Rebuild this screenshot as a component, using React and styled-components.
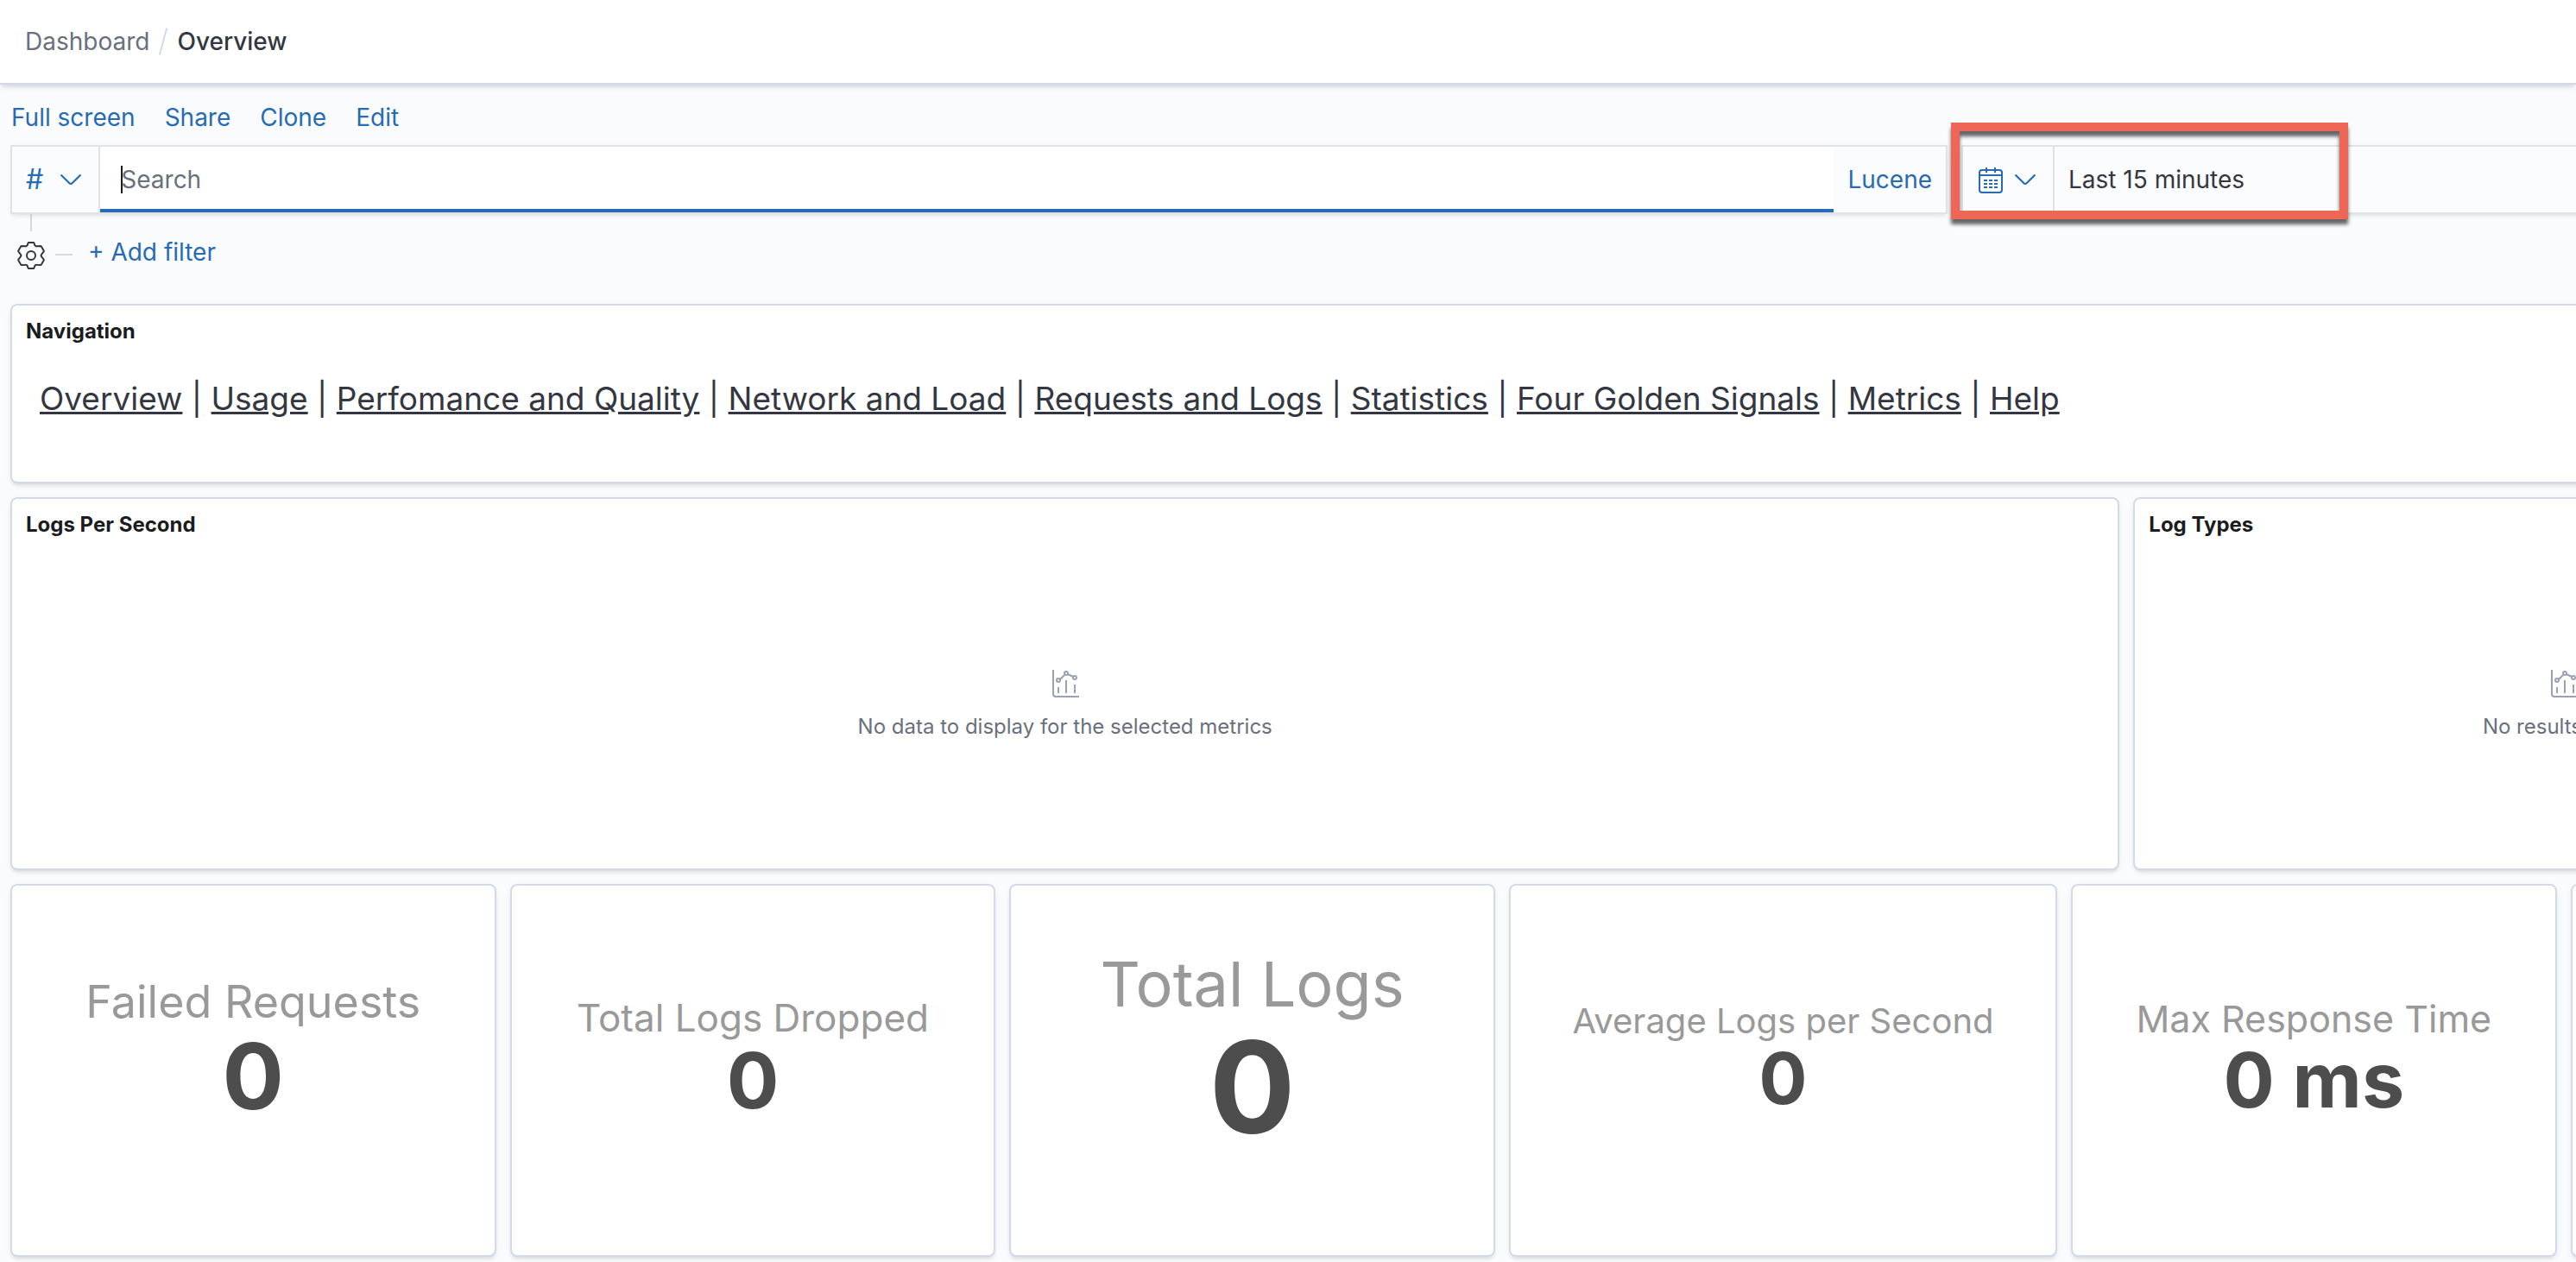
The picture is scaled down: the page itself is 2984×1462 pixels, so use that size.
import React from "react";
import styled, { createGlobalStyle, css } from "styled-components";

const GlobalStyle = createGlobalStyle`
  *, *::before, *::after { box-sizing: border-box; }
  body {
    margin: 0;
    background: #fafbfd;
    color: #343741;
    font-family: Inter, "Liberation Sans", sans-serif;
    font-size: 28px;
    line-height: 48px;
  }
  button, input { font: inherit; color: inherit; }
  svg { display: block; flex: none; }
`;

const blue = "#266bb3";
const line = "#d3dae6";
const controlLine = "#e0e2e5";
const subdued = "#69707d";

const Viewport = styled.div`
  min-height: 100vh;
  overflow: hidden;
`;

const Header = styled.header`
  height: 98px;
  display: flex;
  align-items: center;
  padding: 0 29px;
  background: #fff;
  border-bottom: 2px solid ${line};
  box-shadow: 0 4px 4px -2px rgba(152, 162, 179, 0.3), 0 2px 10px -2px rgba(152, 162, 179, 0.3);
`;

const Crumbs = styled.ol`
  display: flex;
  align-items: center;
  margin: 0;
  padding: 0;
  list-style: none;
`;

const CrumbLink = styled.a`
  color: ${subdued};
  text-decoration: none;
`;

const CrumbDivider = styled.li`
  width: 2px;
  height: 32px;
  margin: 0 15px;
  background: ${line};
  transform: rotate(15deg);
`;

const CurrentCrumb = styled.li`
  font-weight: 500;
`;

/* The dashboard is wider than the window and runs off its right edge. */
const Canvas = styled.div`
  width: calc(100% + 496px);
  padding: 0 12px 6px;
`;

const Menu = styled.nav`
  display: flex;
  gap: 34px;
  padding: 14px 1px 8px;
`;

const TextButton = styled.button`
  padding: 0;
  border: 0;
  background: none;
  color: ${blue};
  cursor: pointer;
`;

const QueryRow = styled.div`
  display: grid;
  grid-template-columns: minmax(0, 1fr) 1196px;
  gap: 16px;
`;

const ControlGroup = styled.div`
  position: relative;
  display: flex;
  height: 80px;
  border: 2px solid ${controlLine};
  background: #fbfcfe;
  box-shadow: 0 4px 4px -2px rgba(152, 162, 179, 0.2), 0 2px 10px -4px rgba(152, 162, 179, 0.2);
`;

const Segment = styled.button`
  display: flex;
  align-items: center;
  gap: ${(p) => p.$gap || 0}px;
  padding: 0 16px;
  border: 0;
  background: none;
  color: ${blue};
  cursor: pointer;
  ${(p) => p.$divided && css`border-right: 2px solid ${controlLine};`}
`;

const Hash = styled.span`
  font-size: 32px;
  font-weight: 400;
`;

const SearchInput = styled.input`
  flex: 1;
  min-width: 0;
  padding: 0 24px;
  border: 0;
  border-radius: 0;
  outline: 0;
  background: linear-gradient(#1a1c21, #1a1c21) 24px center / 2px 32px no-repeat #fff;
  box-shadow: inset 0 -4px 0 ${blue};
  &::placeholder { color: ${subdued}; opacity: 1; }
`;

const RangeButton = styled(Segment)`
  flex: 1;
  color: #343741;
`;

const Highlight = styled.div`
  position: absolute;
  top: -28px;
  left: -14px;
  width: 460px;
  height: 112px;
  border: 10px solid #ee6656;
  filter: drop-shadow(0 6px 2px rgba(0, 0, 0, 0.6));
  pointer-events: none;
`;

const FilterRow = styled.div`
  display: flex;
  align-items: flex-start;
  height: 104px;
  padding: 0 8px;
`;

const FilterOptions = styled.button`
  display: flex;
  flex-direction: column;
  align-items: center;
  gap: 12px;
  width: 32px;
  padding: 0;
  border: 0;
  background: none;
  cursor: pointer;
  &::before {
    content: "";
    width: 2px;
    height: 20px;
    background: ${line};
  }
`;

const Dash = styled.span`
  width: 20px;
  height: 2px;
  margin: 46px 18px 0 12px;
  background: ${line};
`;

const AddFilter = styled(TextButton)`
  margin-top: 20px;
`;

const Grid = styled.main`
  display: grid;
  grid-template-columns: repeat(48, minmax(0, 1fr));
  grid-auto-rows: 40px;
  gap: 16px;
`;

const PanelBox = styled.section`
  grid-column: span ${(p) => p.$cols};
  grid-row: span ${(p) => p.$rows};
  display: flex;
  flex-direction: column;
  min-width: 0;
  border: 2px solid ${line};
  border-radius: 8px;
  background: #fff;
  box-shadow: 0 4px 4px -2px rgba(152, 162, 179, 0.3), 0 2px 10px -4px rgba(152, 162, 179, 0.3);
`;

const PanelTitle = styled.h2`
  margin: 0;
  padding: 12px 16px 4px;
  color: #1a1c21;
  font-size: 24px;
  line-height: 36px;
  font-weight: 700;
`;

const LinkList = styled.p`
  margin: 0;
  padding: 28px 32px;
  font-size: 37px;
  line-height: 56px;
`;

const PageLink = styled.a`
  color: inherit;
  text-decoration: underline;
`;

const Empty = styled.div`
  flex: 1;
  display: flex;
  flex-direction: column;
  align-items: center;
  justify-content: center;
  gap: 16px;
  color: ${subdued};
  font-size: 24px;
  line-height: 36px;
`;

const Metric = styled.div`
  flex: 1;
  display: flex;
  flex-direction: column;
  align-items: center;
  justify-content: center;
  padding-bottom: ${(p) => p.$foot}px;
  white-space: nowrap;
`;

const MetricLabel = styled.div`
  color: #999;
  font-size: ${(p) => p.$size}px;
  line-height: ${(p) => p.$line}px;
`;

const MetricValue = styled.div`
  color: #4d4d4d;
  font-size: ${(p) => p.$size}px;
  line-height: ${(p) => p.$size}px;
  font-weight: 700;
`;

const Chevron = () => (
  <svg width="32" height="32" viewBox="0 0 16 16" fill="currentColor" aria-hidden="true">
    <path d="M13.069 5.157L8.384 9.768a.546.546 0 01-.768 0L2.93 5.158a.552.552 0 00-.771 0 .53.53 0 000 .759l4.684 4.61a1.65 1.65 0 002.312 0l4.684-4.61a.53.53 0 000-.76.552.552 0 00-.771 0z" />
  </svg>
);

const CalendarIcon = () => (
  <svg width="32" height="32" viewBox="0 0 32 32" fill="none" stroke="currentColor" strokeWidth="2" aria-hidden="true">
    <rect x="3" y="5" width="26" height="26" rx="3" />
    <path d="M3 11h26M11 2v6M21 2v6" />
    <path d="M8 17h4M14 17h4M20 17h4M8 21h4M14 21h4M20 21h4M8 25h4M14 25h4M20 25h4" />
  </svg>
);

const GearIcon = () => (
  <svg width="32" height="32" viewBox="0 0 32 32" fill="none" stroke="#343741" strokeWidth="2" strokeLinejoin="round" aria-hidden="true">
    <path d="M12.800 1h6.400l1.200 3.200q.5 1.300 1.900 1.100L26.800 5q.8 0 1.200.7l2.600 4.600q.4.700-.1 1.400L28 14.800q-.8 1.200 0 2.400l2.500 3.100q.5.700.1 1.400L28 26.300q-.4.700-1.200.7l-4.500-.3q-1.400-.2-1.900 1.100L19.200 31h-6.400l-1.200-3.200q-.5-1.300-1.900-1.100L5.200 27q-.8 0-1.200-.7l-2.600-4.600q-.4-.7.1-1.400L4 17.200q.8-1.200 0-2.400l-2.500-3.100q-.5-.7-.1-1.400L4 5.700Q4.400 5 5.200 5l4.500.3q1.400.2 1.900-1.100z" />
    <circle cx="16" cy="16" r="5" />
  </svg>
);

const ChartIcon = () => (
  <svg width="32" height="32" viewBox="0 0 32 32" fill="none" stroke="#98a2b3" strokeWidth="2" aria-hidden="true">
    <path d="M2 0v28a3 3 0 003 3h27M8 20v7M17 12v15M27 17v10M10 11l5-5M19 5l6 3" />
    <circle cx="8" cy="12" r="2" />
    <circle cx="17" cy="4" r="2" />
    <circle cx="27" cy="9" r="2" />
  </svg>
);

const pages = [
  "Overview",
  "Usage",
  "Perfomance and Quality",
  "Network and Load",
  "Requests and Logs",
  "Statistics",
  "Four Golden Signals",
  "Metrics",
  "Help",
];

const metrics = [
  { label: "Failed Requests", value: "0", cols: 8, size: 52, line: 66, valueSize: 106, foot: 52 },
  { label: "Total Logs Dropped", value: "0", cols: 8, size: 44, line: 56, valueSize: 90, foot: 32 },
  { label: "Total Logs", value: "0", cols: 8, size: 72, line: 92, valueSize: 148, foot: 52 },
  { label: "Average Logs per Second", value: "0", cols: 9, size: 40, line: 50, valueSize: 83, foot: 32 },
  { label: "Max Response Time", value: "0 ms", cols: 8, size: 43, line: 54, valueSize: 88, foot: 32 },
];

function Panel({ title, cols, rows, children }) {
  return (
    <PanelBox $cols={cols} $rows={rows}>
      {title && <PanelTitle>{title}</PanelTitle>}
      {children}
    </PanelBox>
  );
}

export default function App() {
  return (
    <Viewport>
      <GlobalStyle />
      <Header>
        <nav aria-label="Breadcrumbs">
          <Crumbs>
            <li><CrumbLink href="#dashboards">Dashboard</CrumbLink></li>
            <CrumbDivider aria-hidden="true" />
            <CurrentCrumb aria-current="page">Overview</CurrentCrumb>
          </Crumbs>
        </nav>
      </Header>
      <Canvas>
        <Menu>
          {["Full screen", "Share", "Clone", "Edit"].map((item) => (
            <TextButton key={item} type="button">{item}</TextButton>
          ))}
        </Menu>
        <QueryRow>
          <ControlGroup>
            <Segment type="button" aria-label="Saved queries" $divided $gap={16}>
              <Hash>#</Hash>
              <Chevron />
            </Segment>
            <SearchInput type="text" placeholder="Search" aria-label="Search" />
            <Segment type="button">Lucene</Segment>
          </ControlGroup>
          <ControlGroup>
            <Segment type="button" aria-label="Quick time ranges" $divided $gap={8}>
              <CalendarIcon />
              <Chevron />
            </Segment>
            <RangeButton type="button">Last 15 minutes</RangeButton>
            <Highlight />
          </ControlGroup>
        </QueryRow>
        <FilterRow>
          <FilterOptions type="button" aria-label="Filter options">
            <GearIcon />
          </FilterOptions>
          <Dash />
          <AddFilter type="button">+ Add filter</AddFilter>
        </FilterRow>
        <Grid>
          <Panel title="Navigation" cols={48} rows={4}>
            <LinkList>
              {pages.map((page, i) => (
                <React.Fragment key={page}>
                  {i > 0 && " | "}
                  <PageLink href={"#" + page.toLowerCase().replace(/ /g, "-")}>{page}</PageLink>
                </React.Fragment>
              ))}
            </LinkList>
          </Panel>
          <Panel title="Logs Per Second" cols={34} rows={8}>
            <Empty>
              <ChartIcon />
              <span>No data to display for the selected metrics</span>
            </Empty>
          </Panel>
          <Panel title="Log Types" cols={14} rows={8}>
            <Empty>
              <ChartIcon />
              <span>No results found</span>
            </Empty>
          </Panel>
          {metrics.map((m) => (
            <Panel key={m.label} cols={m.cols} rows={8}>
              <Metric $foot={m.foot}>
                <MetricLabel $size={m.size} $line={m.line}>{m.label}</MetricLabel>
                <MetricValue $size={m.valueSize}>{m.value}</MetricValue>
              </Metric>
            </Panel>
          ))}
          <Panel cols={7} rows={8} />
        </Grid>
      </Canvas>
    </Viewport>
  );
}
